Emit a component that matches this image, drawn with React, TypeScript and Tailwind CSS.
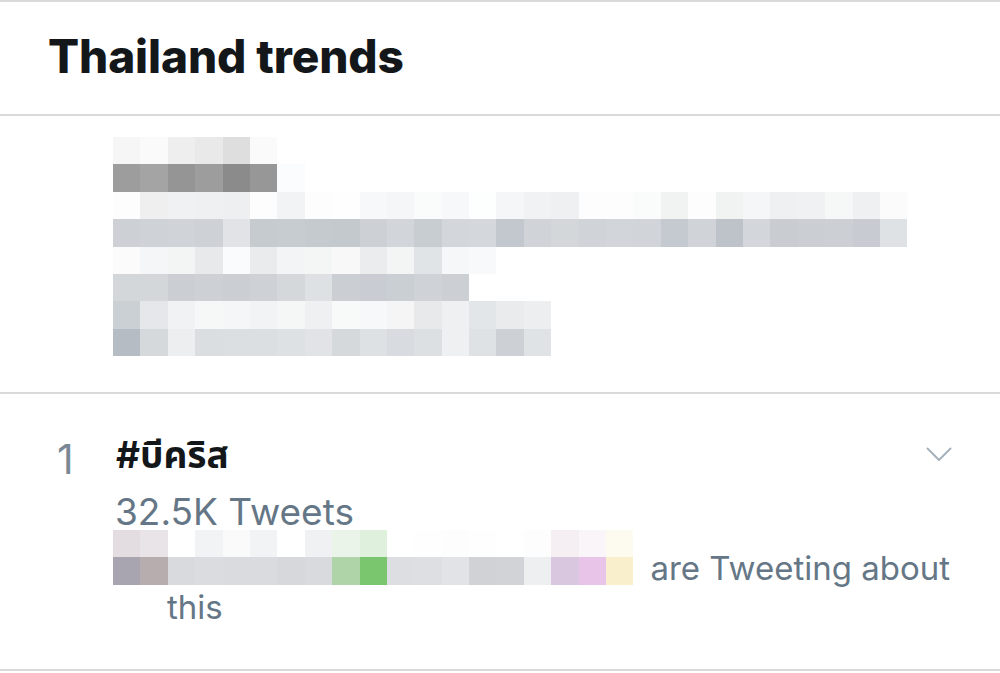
import React from "react";

const m1: string[][] = [
  ["#f6f6f6", "#fafafa", "#eeeeee", "#e9e9e9", "#dedede", "#fafafa"],
  ["#9d9d9d", "#a4a4a4", "#959595", "#9d9d9d", "#8b8b8b", "#979797", "#fbfcfd"],
  ["#fdfdfd", "#efefef", "#f0f1f2", "#eff0f1", "#eeeff0", "#fdfdfd", "#f1f3f4", "#fdfdfd", "#fefefe", "#f7f8f9", "#f4f6f7", "#fafbfb", "#f7f8f9", "#fdfefe", "#f5f6f7", "#f0f2f3", "#eef0f1", "#fdfdfd", "#fdfdfd", "#fafbfb", "#f1f2f2", "#fdfdfd", "#f1f2f2", "#f5f6f7", "#eff0f1", "#f0f1f2", "#f6f7f7", "#eef0f1", "#fbfbfb"],
  ["#cdd1d5", "#cfd3d7", "#d0d4d8", "#ced2d6", "#e1e3e6", "#c6cbd0", "#c7ccd1", "#c5cacf", "#c4c9ce", "#cdd1d5", "#d2d6da", "#c8cdd2", "#d3d6da", "#d4d7db", "#c3c8ce", "#d0d3d7", "#d4d7da", "#d0d4d8", "#d2d5d9", "#d1d4d8", "#c5cad1", "#d0d3d7", "#bec3ca", "#d3d6da", "#c9cdd2", "#cbcfd3", "#ccd0d4", "#c8ccd2", "#dfe2e4"],
  ["#fbfbfb", "#f5f6f7", "#f3f4f4", "#e8e9ea", "#fafbfc", "#e9ebec", "#f3f4f5", "#f4f5f5", "#f8f8f9", "#ebeced", "#f3f4f4", "#e1e4e7", "#f6f7f8", "#f8f9fa"],
  ["#d4d7da", "#d4d7da", "#cbcfd3", "#cdd1d5", "#cbcfd3", "#ced2d6", "#d5d8db", "#dee1e4", "#cbcfd3", "#c9cdd3", "#cacfd4", "#cfd3d7", "#ccd0d4"],
  ["#cbd0d5", "#e5e7ea", "#f1f2f3", "#f6f7f7", "#f5f6f7", "#f2f3f4", "#f5f6f6", "#eff0f1", "#f8f9f9", "#f7f8f9", "#f5f5f6", "#e8e9eb", "#eff0f1", "#e3e6e9", "#e9ebed", "#eceef0"],
  ["#b5bcc4", "#d5d9dc", "#eceeef", "#dbdee1", "#dcdfe2", "#dcdfe2", "#dee1e4", "#e1e3e6", "#d5d9dc", "#dee1e4", "#d8dbdf", "#dde0e3", "#eff0f1", "#dfe2e5", "#cdd1d6", "#e0e3e6"],
];

const m2: string[][] = [
  ["#e3dde2", "#e8e4e8", "#ffffff", "#f2f3f4", "#fafafa", "#f2f3f4", "#ffffff", "#f0f1f3", "#eaf4e8", "#dff0dc", "#ffffff", "#fefefe", "#fdfdfd", "#fefefe", "#ffffff", "#fdfdfd", "#f5eef2", "#faf5f8", "#fdfaf0"],
  ["#a9a5b0", "#b8adae", "#d8dadd", "#dadcdf", "#d9dbde", "#d9dbde", "#d6d8db", "#d8dadd", "#aed4a8", "#79c66e", "#dcdee1", "#dddfe2", "#e1e3e6", "#d0d2d5", "#d1d3d6", "#eeeff1", "#d9c7e0", "#e8c4e8", "#f9efcc"],
];

function Mosaic({ rows }: { rows: string[][] }) {
  return (
    <div className="flex flex-col shrink-0">
      {rows.map((r, i) => (
        <div key={i} className="flex h-[27.4px]">
          {r.map((c, j) => (
            <div key={j} className="w-[27.4px] h-[27.4px] shrink-0" style={{ backgroundColor: c }} />
          ))}
        </div>
      ))}
    </div>
  );
}

export default function App() {
  return (
    <div
      className="w-[1000px] h-[673px] bg-white overflow-hidden flex flex-col"
      style={{ fontFamily: "Inter, 'Noto Sans', 'Noto Sans Thai', 'DejaVu Sans', sans-serif" }}
    >
      <div className="h-[116px] shrink-0 border-t-2 border-b-2 border-[#dadada] pl-[48px] pt-[31px]">
        <h1 className="text-[46px] leading-none font-extrabold text-[#14171a] tracking-[-0.1px]">Thailand trends</h1>
      </div>
      <div className="h-[278px] shrink-0 border-b-2 border-[#dadada] pl-[113px] pt-[21px]">
        <Mosaic rows={m1} />
      </div>
      <div className="h-[277px] shrink-0 border-b-2 border-[#dadada] flex pl-[55px] pr-[48px]">
        <div className="w-[58px] shrink-0 pt-[45px] pl-[2px] text-[41px] leading-none text-[#7a8894]">1</div>
        <div className="flex-1 min-w-0 flex flex-col">
          <div className="pt-[42px] pl-[3px] text-[37px] leading-none font-bold text-[#14171a]">#บีคริส</div>
          <div className="mt-[20px] ml-[2px] text-[37px] leading-none text-[#657786]">32.5K Tweets</div>
          <div className="flex items-end">
            <Mosaic rows={m2} />
            <span className="ml-[17px] whitespace-nowrap text-[33px] leading-none text-[#657786]">are Tweeting about</span>
          </div>
          <div className="ml-[54px] mt-[6px] text-[33px] leading-none text-[#657786]">this</div>
        </div>
        <div className="pt-[53px] shrink-0">
          <svg width="26" height="15" viewBox="0 0 26 15" fill="none">
            <path d="M1.5 1.5 L13 13 L24.5 1.5" stroke="#a7b2bc" strokeWidth="2" strokeLinecap="round" strokeLinejoin="round" />
          </svg>
        </div>
      </div>
    </div>
  );
}
